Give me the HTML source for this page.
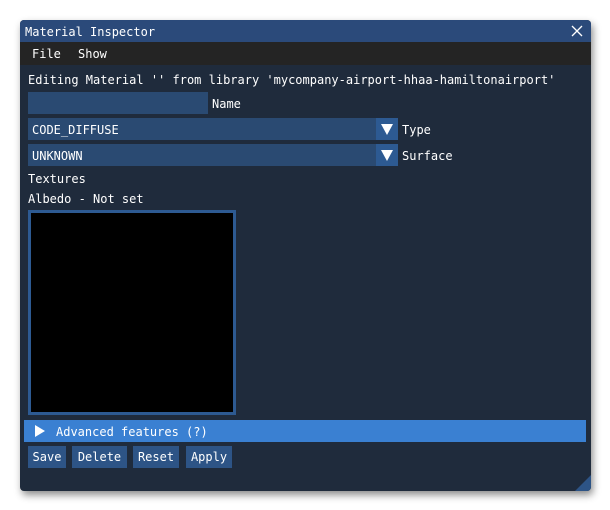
<html><head><style>
body{margin:0;width:610px;height:510px;background:#fff;position:relative;overflow:hidden;font-family:"DejaVu Sans Mono","Liberation Mono",monospace;font-size:12px;color:#fff}
.a{position:absolute}
.w{left:20px;top:20px;width:571px;height:471px;background:#1f2b3c;border-radius:4px;box-shadow:2px 4px 8px rgba(0,0,0,.45);overflow:hidden}
.t{line-height:16px;white-space:nowrap}
.f{background:#2a4a72}
.b{background:#2d5486;height:22px;line-height:22px;text-align:center}
.tri{width:0;height:0;border-left:6px solid transparent;border-right:6px solid transparent;border-top:11px solid #fff}
</style></head><body>
<div class="a w">
 <div class="a" style="left:0;top:0;width:571px;height:22px;background:#2b4a7a"></div>
 <div class="a t" style="left:5px;top:4px">Material Inspector</div>
 <svg class="a" style="left:551px;top:5px" width="12" height="12"><path d="M1 1L11 11M11 1L1 11" stroke="#fff" stroke-width="1.3"/></svg>
 <div class="a" style="left:0;top:22px;width:571px;height:23px;background:#242424"></div>
 <div class="a t" style="left:12px;top:26px">File</div>
 <div class="a t" style="left:58px;top:26px">Show</div>
 <div class="a t" style="left:8px;top:52px">Editing Material '' from library 'mycompany-airport-hhaa-hamiltonairport'</div>
 <div class="a f" style="left:8px;top:72px;width:180px;height:22px"></div>
 <div class="a t" style="left:192px;top:76px">Name</div>
 <div class="a f" style="left:8px;top:98px;width:348px;height:22px"></div>
 <div class="a t" style="left:12px;top:102px">CODE_DIFFUSE</div>
 <div class="a" style="left:356px;top:98px;width:22px;height:22px;background:#2d5a92"></div>
 <div class="a tri" style="left:361px;top:104px"></div>
 <div class="a t" style="left:382px;top:102px">Type</div>
 <div class="a f" style="left:8px;top:124px;width:348px;height:22px"></div>
 <div class="a t" style="left:12px;top:128px">UNKNOWN</div>
 <div class="a" style="left:356px;top:124px;width:22px;height:22px;background:#2d5a92"></div>
 <div class="a tri" style="left:361px;top:130px"></div>
 <div class="a t" style="left:382px;top:128px">Surface</div>
 <div class="a t" style="left:8px;top:151px">Textures</div>
 <div class="a t" style="left:8px;top:171px">Albedo - Not set</div>
 <div class="a" style="left:8px;top:190px;width:202px;height:199px;background:#000;border:3px solid #2d5a92"></div>
 <div class="a" style="left:4px;top:400px;width:562px;height:22px;background:#3a80d2"></div>
 <svg class="a" style="left:15px;top:405px" width="10" height="12"><path d="M0 0L10 6L0 12Z" fill="#fff"/></svg>
 <div class="a t" style="left:36px;top:404px">Advanced features (?)</div>
 <div class="a b" style="left:8px;top:426px;width:38px">Save</div>
 <div class="a b" style="left:52px;top:426px;width:55px">Delete</div>
 <div class="a b" style="left:113px;top:426px;width:46px">Reset</div>
 <div class="a b" style="left:166px;top:426px;width:46px">Apply</div>
 <svg class="a" style="left:555px;top:455px" width="16" height="16"><path d="M16 0L16 16L0 16Z" fill="#2d5486"/></svg>
</div>
</body></html>
